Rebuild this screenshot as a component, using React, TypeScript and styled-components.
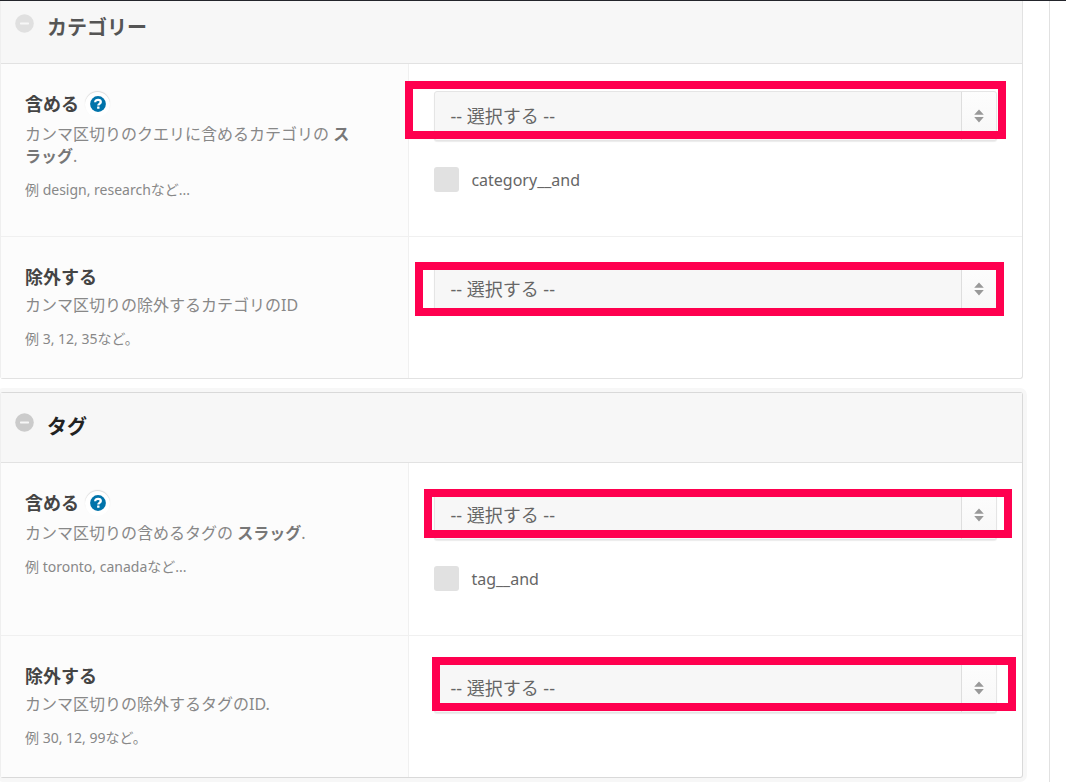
import React, { useId } from "react";
import type { ReactNode } from "react";
import styled, { createGlobalStyle } from "styled-components";

const GlobalStyle = createGlobalStyle`
  *, *::before, *::after { box-sizing: border-box; }
  body {
    margin: 0;
    background: #fff;
    color: #666;
    font-family: "Noto Sans", "Noto Sans CJK JP", sans-serif;
    font-size: 16px;
    line-height: 22px;
  }
`;

const Page = styled.div`
  display: flex;
  min-height: 100vh;
  border-top: 1px solid #23252b;
`;

const Main = styled.main`
  flex: 1;
  min-width: 0;
  padding-right: 26px;
  padding-bottom: 4px;
  border-right: 1px solid #e1e1e1;
`;

const Side = styled.aside`
  width: 16px;
`;

const Panel = styled.section<{ $active?: boolean; $cut?: boolean }>`
  border: 1px solid ${(p) => (p.$active ? "#d9d9d9" : "#e2e2e2")};
  border-left-color: #efefef;
  border-top-width: ${(p) => (p.$cut ? "0" : "1px")};
  border-radius: ${(p) => (p.$cut ? "0 0 3px 3px" : "3px")};
  margin-bottom: ${(p) => (p.$cut ? "13px" : "0")};
  box-shadow: ${(p) => (p.$active ? "0 0 0 4px #f7f7f7" : "none")};
`;

const PanelHead = styled.header<{ $cut?: boolean }>`
  display: flex;
  align-items: flex-start;
  gap: 13px;
  padding: ${(p) => (p.$cut ? "13px" : "20px")} 14px 22px;
  border-bottom: 1px solid #e2e2e2;
  background: #f7f7f7;
`;

const Toggle = styled.button<{ $active?: boolean }>`
  display: flex;
  width: 19px;
  height: 19px;
  padding: 0;
  border: 0;
  background: none;
  color: ${(p) => (p.$active ? "#cbcbcb" : "#e0e0e0")};
`;

const Title = styled.h2<{ $active?: boolean }>`
  margin: 0;
  padding-top: 1px;
  color: ${(p) => (p.$active ? "#222" : "#555")};
  font-size: 20px;
  line-height: 26px;
  font-weight: 700;
`;

const Row = styled.div`
  display: grid;
  grid-template-columns: 2fr 3fr;
  & + & { border-top: 1px solid #f0f0f0; }
`;

const Info = styled.div`
  padding: 27px 50px 28px 24px;
  border-right: 1px solid #f0f0f0;
  background: #fcfcfc;
`;

const LabelLine = styled.div<{ $help?: boolean }>`
  display: flex;
  align-items: center;
  gap: 6px;
  height: ${(p) => (p.$help ? "26px" : "25px")};
  margin-bottom: ${(p) => (p.$help ? "6px" : "5px")};
`;

const Label = styled.label`
  color: #444;
  font-size: 18px;
  font-weight: 700;
`;

const Help = styled.button`
  display: flex;
  align-items: center;
  justify-content: center;
  width: 25px;
  height: 25px;
  padding: 0;
  border: 0;
  border-radius: 50%;
  background: #fff;
  box-shadow: 0 -1px 1px #dadada;
`;

const Description = styled.p`
  margin: 0 0 12px;
  color: #888;
`;

const Strong = styled.strong`
  color: #777;
`;

const Example = styled.p`
  margin: 0;
  color: #888;
  font-size: 14px;
`;

const Control = styled.div`
  padding: 27px 25px 28px;
`;

const SelectWrap = styled.div`
  position: relative;
  height: 50px;
`;

const Select = styled.select`
  appearance: none;
  display: block;
  width: 100%;
  height: 50px;
  padding: 0 52px 0 15px;
  border: 1px solid #e5e5e5;
  border-radius: 3px;
  background: #f7f7f7;
  box-shadow: 0 1px 1px #ececec;
  color: #666;
  font: inherit;
  font-size: 18px;
`;

const Arrows = styled.span`
  position: absolute;
  top: 1px;
  right: 1px;
  bottom: 1px;
  display: flex;
  align-items: center;
  justify-content: center;
  width: 35px;
  border-left: 1px solid #dedede;
  border-radius: 0 3px 3px 0;
  background: linear-gradient(#fdfdfd, #f7f7f7);
  pointer-events: none;
`;

const Highlight = styled.span<{ $inset: string }>`
  position: absolute;
  inset: ${(p) => p.$inset};
  border: 8px solid #ff004f;
  pointer-events: none;
`;

const CheckLine = styled.label`
  display: flex;
  align-items: center;
  gap: 12px;
  height: 25px;
  margin: 26px 0 16px;
  font-size: 16px;
  line-height: 24px;
`;

const Check = styled.input`
  appearance: none;
  width: 25px;
  height: 25px;
  margin: 0;
  border-radius: 3px;
  background: #e1e1e1;
  &:checked { background: #0073aa; }
`;

const MinusIcon = () => (
  <svg width="19" height="19" viewBox="0 0 19 19" aria-hidden="true">
    <circle cx="9.5" cy="9.5" r="9.3" fill="currentColor" />
    <rect x="5" y="8.4" width="9" height="2" rx="0.6" fill="#f7f7f7" />
  </svg>
);

const HelpIcon = () => (
  <svg width="16" height="16" viewBox="0 0 16 16" aria-hidden="true">
    <circle cx="8" cy="8" r="7.9" fill="#0073aa" />
    <path
      d="M5.2 6.2C5.2 4.5 6.4 3.8 8.1 3.8s2.7.9 2.7 2.3c0 1.8-2.5 1.7-2.5 3.4"
      fill="none"
      stroke="#fff"
      strokeWidth="2.3"
    />
    <rect x="7.1" y="10.4" width="2.4" height="2.4" rx="0.4" fill="#fff" />
  </svg>
);

const ArrowsIcon = () => (
  <svg width="10" height="14" viewBox="0 0 10 14" aria-hidden="true">
    <path d="M5 0.5 9.8 5.8H0.2zM5 13.4 0.2 8.1h9.6z" fill="#999" />
  </svg>
);

type FieldProps = {
  label: string;
  help?: boolean;
  description: ReactNode;
  example: string;
  highlight: string;
  check?: string;
};

function Field({ label, help, description, example, highlight, check }: FieldProps) {
  const id = useId();
  return (
    <Row>
      <Info>
        <LabelLine $help={help}>
          <Label htmlFor={id}>{label}</Label>
          {help && (
            <Help type="button" aria-label="ヘルプ">
              <HelpIcon />
            </Help>
          )}
        </LabelLine>
        <Description>{description}</Description>
        <Example>{example}</Example>
      </Info>
      <Control>
        <SelectWrap>
          <Select id={id}>
            <option>-- 選択する --</option>
          </Select>
          <Arrows>
            <ArrowsIcon />
          </Arrows>
          <Highlight $inset={highlight} />
        </SelectWrap>
        {check && (
          <CheckLine>
            <Check type="checkbox" />
            {check}
          </CheckLine>
        )}
      </Control>
    </Row>
  );
}

type GroupProps = { title: string; active?: boolean; cut?: boolean; children: ReactNode };

function Group({ title, active, cut, children }: GroupProps) {
  return (
    <Panel $active={active} $cut={cut}>
      <PanelHead $cut={cut}>
        <Toggle type="button" aria-label="折りたたむ" $active={active}>
          <MinusIcon />
        </Toggle>
        <Title $active={active}>{title}</Title>
      </PanelHead>
      {children}
    </Panel>
  );
}

export default function App() {
  return (
    <>
      <GlobalStyle />
      <Page>
        <Main>
          <Group title="カテゴリー" cut>
            <Field
              label="含める"
              help
              description={
                <>
                  カンマ区切りのクエリに含めるカテゴリの <Strong>スラッグ</Strong>.
                </>
              }
              example="例 design, researchなど..."
              highlight="-10px -9px 2px -29px"
              check="category__and"
            />
            <Field
              label="除外する"
              description="カンマ区切りの除外するカテゴリのID"
              example="例 3, 12, 35など。"
              highlight="-2px -7px -2px -19px"
            />
          </Group>
          <Group title="タグ" active>
            <Field
              label="含める"
              help
              description={
                <>
                  カンマ区切りの含めるタグの <Strong>スラッグ</Strong>.
                </>
              }
              example="例 toronto, canadaなど..."
              highlight="-1px -15px 2px -10px"
              check="tag__and"
            />
            <Field
              label="除外する"
              description="カンマ区切りの除外するタグのID."
              example="例 30, 12, 99など。"
              highlight="-6px -19px 2px -2px"
            />
          </Group>
        </Main>
        <Side />
      </Page>
    </>
  );
}
